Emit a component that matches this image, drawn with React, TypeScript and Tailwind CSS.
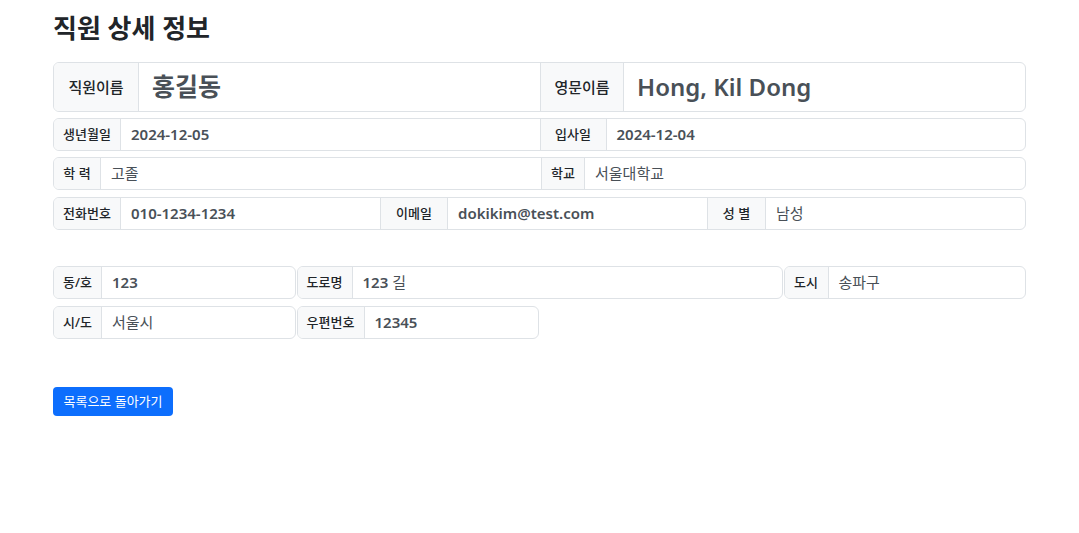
import React from "react";

const font = { fontFamily: '"Noto Sans", "Noto Sans CJK KR", sans-serif' };

type Cell = { label: string; value: React.ReactNode; lw: string };

function Row({ cells, big, className = "" }: { cells: Cell[]; big?: boolean; className?: string }) {
  return (
    <div
      className={`flex border border-[#dee2e6] rounded-[6px] overflow-hidden ${big ? "h-[50px]" : "h-[33px]"} ${className}`}
    >
      {cells.map((c, i) => (
        <React.Fragment key={i}>
          <div
            className={`${c.lw} shrink-0 flex items-center justify-center bg-[#f8f9fa] text-[#212529] font-medium ${
              big ? "text-[15px]" : "text-[13px]"
            } ${i > 0 ? "border-l border-[#dee2e6]" : ""} border-r border-[#dee2e6]`}
          >
            {c.label}
          </div>
          <div
            className={`flex-1 min-w-0 flex items-center text-[#495057] ${
              big ? "px-[13px] text-[24px]" : "px-[10px] text-[15px]"
            }`}
          >
            {c.value}
          </div>
        </React.Fragment>
      ))}
    </div>
  );
}

const B = ({ children }: { children: React.ReactNode }) => <span className="font-semibold">{children}</span>;

export default function App() {
  return (
    <div className="min-h-screen bg-white px-[53px] pt-[9px]" style={font}>
      <h1 className="text-[26px] leading-[38px] font-bold text-[#212529] mb-[15px]">직원 상세 정보</h1>

      <Row
        big
        cells={[
          { label: "직원이름", value: <span className="font-bold text-[25px]">홍길동</span>, lw: "w-[85px]" },
          { label: "영문이름", value: <span className="font-semibold">Hong, Kil Dong</span>, lw: "w-[84px]" },
        ]}
      />
      <Row
        className="mt-[6px]"
        cells={[
          { label: "생년월일", value: <B>2024-12-05</B>, lw: "w-[67px]" },
          { label: "입사일", value: <B>2024-12-04</B>, lw: "w-[67px]" },
        ]}
      />
      <Row
        className="mt-[6px]"
        cells={[
          { label: "학 력", value: "고졸", lw: "w-[47px]" },
          { label: "학교", value: "서울대학교", lw: "w-[44px]" },
        ]}
      />
      <Row
        className="mt-[7px]"
        cells={[
          { label: "전화번호", value: <B>010-1234-1234</B>, lw: "w-[67px]" },
          { label: "이메일", value: <B>dokikim@test.com</B>, lw: "w-[68px]" },
          { label: "성 별", value: "남성", lw: "w-[59px]" },
        ]}
      />

      <div className="grid grid-cols-4 gap-x-[1px] gap-y-[7px] mt-[36px]">
        <Row cells={[{ label: "동/호", value: <B>123</B>, lw: "w-[48px]" }]} />
        <Row
          className="col-span-2"
          cells={[
            {
              label: "도로명",
              value: (
                <span>
                  <B>123</B> 길
                </span>
              ),
              lw: "w-[55px]",
            },
          ]}
        />
        <Row cells={[{ label: "도시", value: "송파구", lw: "w-[44px]" }]} />
        <Row cells={[{ label: "시/도", value: "서울시", lw: "w-[48px]" }]} />
        <Row cells={[{ label: "우편번호", value: <B>12345</B>, lw: "w-[67px]" }]} />
      </div>

      <button className="mt-[48px] h-[29px] w-[120px] rounded-[4px] bg-[#0d6efd] text-white text-[13px] flex items-center justify-center">
        목록으로 돌아가기
      </button>
    </div>
  );
}
